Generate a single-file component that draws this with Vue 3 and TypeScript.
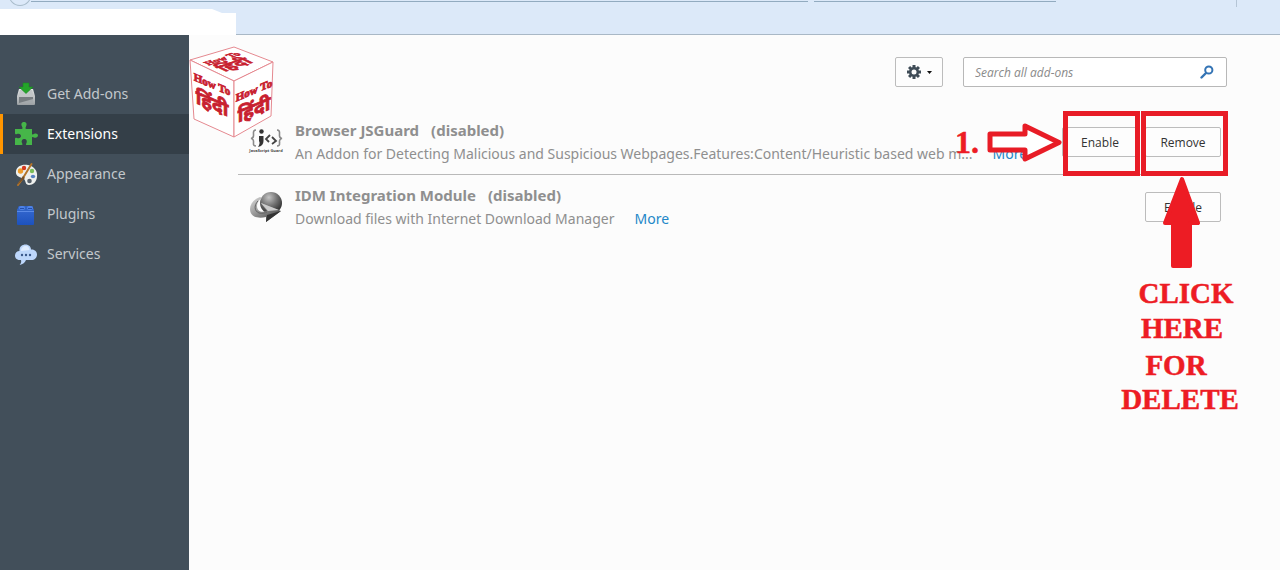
<script setup lang="ts">
import { ref } from 'vue'

interface Category { id: string; label: string }
interface Addon { id: string; name: string; description: string; removable: boolean }

const categories: Category[] = [
  { id: 'get', label: 'Get Add-ons' },
  { id: 'extensions', label: 'Extensions' },
  { id: 'appearance', label: 'Appearance' },
  { id: 'plugins', label: 'Plugins' },
  { id: 'services', label: 'Services' },
]
const addons: Addon[] = [
  {
    id: 'jsguard',
    name: 'Browser JSGuard',
    description: 'An Addon for Detecting Malicious and Suspicious Webpages.Features:Content/Heuristic based web m...',
    removable: true,
  },
  {
    id: 'idm',
    name: 'IDM Integration Module',
    description: 'Download files with Internet Download Manager',
    removable: false,
  },
]
const selected = ref('extensions')
const query = ref('')
</script>

<template>
  <div class="window">
    <header class="chrome">
      <span class="back"></span>
      <span class="field address"></span>
      <span class="field find"></span>
      <span class="divider"></span>
      <svg class="tab" width="236" height="26" viewBox="0 0 236 26" aria-hidden="true">
        <path d="M0 0H212L222 4H236V26H0Z" fill="#fff" />
      </svg>
    </header>

    <div class="body">
      <nav class="sidebar">
        <a
          v-for="c in categories"
          :key="c.id"
          href="#"
          class="category"
          :class="{ active: selected === c.id }"
          @click.prevent="selected = c.id"
        >
          <svg v-if="c.id === 'get'" class="cat-icon" viewBox="0 0 24 24" aria-hidden="true">
            <defs>
              <linearGradient id="tray" x1="0" y1="0" x2="0" y2="1">
                <stop offset="0" stop-color="#e4e6e7" /><stop offset="1" stop-color="#9a9fa2" />
              </linearGradient>
            </defs>
            <path d="M5 7H19L21 14V22Q21 23 20 23H4Q3 23 3 22V14Z" fill="url(#tray)" />
            <path d="M6 8H18L19.500 14H4.500Z" fill="#c2c6c8" />
            <path d="M5 15H19V21H5Z" fill="#777d81" />
            <path d="M5 21L19 17V21Z" fill="#a4a9ac" />
            <path d="M9 1H15V5H19L12 11.500L5 5H9Z" fill="#25a52a" stroke="#188a20" stroke-width=".6" />
          </svg>
          <svg v-else-if="c.id === 'extensions'" class="cat-icon" viewBox="0 0 24 24" aria-hidden="true">
            <path d="M1 7H7.500C9 7 8.500 5.500 8 4.500C6.500 1.500 8 0 10 0S13.500 1.500 12 4.500C11.500 5.500 11 7 12.500 7H18V11.500C18 13 19 12.500 20 12C22 11 24 12 24 13.500S22 16.500 20 15.500C19 15 18 14.500 18 16V23H12.500C11.500 23 12 22 12.500 21C13.500 18.500 12 17 10.300 17S7 18.500 8 21C8.500 22 9 23 7.500 23H1V17C1 15.500 2 15.500 3 16C5.500 17 7 15.500 7 14S5.500 11 3 12C2 12.500 1 12.500 1 11Z" fill="#46b649" />
          </svg>
          <svg v-else-if="c.id === 'appearance'" class="cat-icon" viewBox="0 0 24 24" aria-hidden="true">
            <path d="M2 9C3 4 8 2 14 3C20 4 24 9 23 15C22.500 20 19 23 15 23C11 23 12 19 10 17C7 15 1 15 2 9Z" fill="#eef0ee" />
            <circle cx="6.500" cy="9" r="2.700" fill="#ef9d2c" />
            <circle cx="10" cy="6" r="2.200" fill="#d33a20" />
            <circle cx="18" cy="9" r="2.200" fill="#79bd58" />
            <ellipse cx="19" cy="14.500" rx="2.200" ry="1.800" fill="#5784c3" />
            <circle cx="15.500" cy="19" r="2.300" fill="#56606a" />
            <path d="M17.500 2L9 16L4 23" stroke="#b5752a" stroke-width="2" fill="none" stroke-linecap="round" />
            <path d="M9 14L3 23L11 16Z" fill="#775028" />
          </svg>
          <svg v-else-if="c.id === 'plugins'" class="cat-icon" viewBox="0 0 24 24" aria-hidden="true">
            <defs>
              <linearGradient id="brick" x1="0" y1="0" x2="0" y2="1">
                <stop offset="0" stop-color="#386bd2" /><stop offset="1" stop-color="#1d52bd" />
              </linearGradient>
            </defs>
            <path d="M3 8L5 4H18L20 8V22Q20 23 19 23H4Q3 23 3 22Z" fill="url(#brick)" />
            <path d="M5 4H18L20 9H3Z" fill="#2f63c6" />
            <rect x="5" y="4" width="6" height="4" rx="2" fill="#4f82e6" />
            <rect x="13" y="4" width="6" height="4" rx="2" fill="#4f82e6" />
            <path d="M6 6.500H10M14 6.500H18" stroke="#234eaa" />
            <path d="M3 9.500H20" stroke="#6d9bf0" stroke-width=".7" />
          </svg>
          <svg v-else class="cat-icon" viewBox="0 0 24 24" aria-hidden="true">
            <path d="M6 18C2 18 1 15.500 1 13.500C1 11 3 9 5.500 9C5 5 8 2.500 11.500 2.500C15 2.500 17 5 17 7.500C20.500 7 23 9.500 23 12.500C23 16 20.500 18 17.500 18H12C11 20.500 9 22.500 5.500 23C7 21.500 7.500 20 7 18Z" fill="#bdd7fb" />
            <path d="M7 9C7 6 9 4 12 4C14 4 15.500 6 15.500 8Z" fill="#e0edff" />
            <circle cx="8" cy="13" r="1.200" fill="#39598c" />
            <circle cx="12" cy="13" r="1.200" fill="#39598c" />
            <circle cx="16" cy="13" r="1.200" fill="#39598c" />
          </svg>
          <span>{{ c.label }}</span>
        </a>
      </nav>

      <main class="content">
        <div class="toolbar">
          <button class="btn tools" type="button" aria-label="Tools for all add-ons">
            <svg width="16" height="16" viewBox="0 0 16 16" aria-hidden="true">
              <g fill="#3f4c57">
                <rect v-for="a in [0, 45, 90, 135]" :key="a" x="6.500" y="1" width="3" height="14" :transform="`rotate(${a} 8 8)`" />
                <circle cx="8" cy="8" r="5" />
              </g>
              <circle cx="8" cy="8" r="2.500" fill="#fcfcfc" />
            </svg>
            <svg width="5" height="3" viewBox="0 0 5 3" aria-hidden="true"><path d="M0 0H5L2.500 3Z" fill="#111" /></svg>
          </button>
          <label class="search">
            <input v-model="query" type="text" placeholder="Search all add-ons" aria-label="Search all add-ons" />
            <svg width="14" height="14" viewBox="0 0 14 14" aria-hidden="true">
              <circle cx="8.800" cy="5" r="3.600" fill="none" stroke="#3474b5" stroke-width="2" />
              <path d="M6 8L1.500 12.500" stroke="#3474b5" stroke-width="2.400" stroke-linecap="round" />
            </svg>
          </label>
        </div>

        <ul class="addons">
          <li v-for="a in addons" :key="a.id" class="addon">
            <svg v-if="a.id === 'jsguard'" class="addon-icon" viewBox="0 0 32 32" aria-hidden="true">
              <g fill="none" stroke="#8a8a8a" stroke-width="1.600">
                <path d="M6 4Q3 4 3.500 8Q4 12 1 12.500Q4 13 3.500 17Q3 20 6 20" />
                <path d="M27 4Q30 4 29.500 8Q29 12 32 12.500Q29 13 29.500 17Q30 20 27 20" />
              </g>
              <circle cx="11.500" cy="5.500" r="2.200" fill="#333" />
              <path d="M9 10H13.500V15Q13.500 20 8 21Q10.500 17 9 15Z" fill="#333" />
              <path d="M20 9L16 13L19 16M22 11L26 15L22 18" fill="none" stroke="#444" stroke-width="1.800" />
              <text x="16" y="26" text-anchor="middle" class="tiny">JavaScript Guard</text>
            </svg>
            <svg v-else class="addon-icon" viewBox="0 0 32 32" aria-hidden="true">
              <defs>
                <radialGradient id="ball" cx=".4" cy=".25" r=".8">
                  <stop offset="0" stop-color="#c4c4c4" /><stop offset=".45" stop-color="#777" /><stop offset="1" stop-color="#222" />
                </radialGradient>
                <linearGradient id="swoosh" x1="0" y1="0" x2="1" y2="1">
                  <stop offset="0" stop-color="#ddd" /><stop offset=".5" stop-color="#888" /><stop offset="1" stop-color="#333" />
                </linearGradient>
              </defs>
              <circle cx="21" cy="12" r="11" fill="url(#ball)" />
              <path d="M10 6C4 8 0 13 0 18C0 26 8 28 16 26V31L31 20L11 12L17 20C11 22 7 20 7 15C7 11 9 9 12 7Z" fill="url(#swoosh)" />
              <path d="M8 10C4 14 4 20 9 22C12 23 15 22 17 21" fill="none" stroke="#666" stroke-width="1" />
              <path d="M16 31L31 20L17 24Z" fill="#333" />
              <path d="M11 12L29 19L18 20Z" fill="#ccc" />
            </svg>
            <div class="info">
              <h2 class="name"><span>{{ a.name }}</span><span>(disabled)</span></h2>
              <p class="desc"><span>{{ a.description }}</span><a href="#" @click.prevent>More</a></p>
            </div>
            <div class="actions">
              <button class="btn" type="button">Enable</button>
              <button v-if="a.removable" class="btn" type="button">Remove</button>
            </div>
          </li>
        </ul>

        <svg class="cube" width="86" height="94" viewBox="0 0 86 94" role="img" aria-label="How To हिंदी">
          <g fill="#fff" stroke="#e58990" stroke-width="1" stroke-linejoin="round">
            <path d="M1 14L45 1L84 16L45 35Z" />
            <path d="M1 14L45 35V91L5 73Z" />
            <path d="M45 35L84 16L82 70L45 91Z" />
          </g>
          <g fill="#c8202f" stroke="#c8202f" stroke-width=".8" text-anchor="middle">
            <g transform="matrix(1 .42 0 1 23 42)">
              <text class="how">How To</text><text class="hindi" y="22">हिंदी</text>
            </g>
            <g transform="matrix(1 -.42 0 1 65 42)">
              <text class="how" y="6">How To</text><text class="hindi" y="28">हिंदी</text>
            </g>
            <g transform="matrix(.9 -.3 .8 .4 36 14)">
              <text class="how">How To</text><text class="hindi" y="18">हिंदी</text>
            </g>
          </g>
        </svg>

        <svg class="notes" width="340" height="400" viewBox="940 35 340 400" aria-hidden="true">
          <g fill="none" stroke="#e81c26" stroke-width="5">
            <rect x="1065.500" y="113.500" width="72" height="60" />
            <rect x="1143.500" y="113.500" width="82" height="60" />
            <path d="M990 134H1025V126L1059 142.500L1025 159V150H990Z" fill="#fff" stroke-linejoin="round" />
          </g>
          <path d="M1182 179L1198 223H1190V266H1173V223H1165Z" fill="#ed1c24" stroke="#ed1c24" stroke-width="4" stroke-linejoin="round" />
          <g class="note-text">
            <text x="967" y="153" class="step">1.</text>
            <text x="1186" y="303">CLICK</text>
            <text x="1182" y="338">HERE</text>
            <text x="1176" y="375">FOR</text>
            <text x="1180" y="409">DELETE</text>
          </g>
        </svg>
      </main>
    </div>
  </div>
</template>

<style>
body { margin: 0; }
</style>

<style scoped>
.window {
  display: flex;
  flex-direction: column;
  min-height: 100vh;
  background: #fcfcfc;
  font-family: "Noto Sans", "Open Sans", sans-serif;
  overflow: hidden;
}
.chrome {
  position: relative;
  height: 34px;
  background: #dce9f9;
  border-bottom: 1px solid #a9b8c6;
}
.tab { position: absolute; left: 0; top: 9px; }
.back {
  position: absolute; left: 8px; top: -20px; width: 22px; height: 24px;
  border: 1px solid #a9bccb; border-radius: 50%; clip-path: inset(20px 0 0 0);
}
.field { position: absolute; top: 0; height: 1px; border-bottom: 1px solid #92abc0; }
.address { left: 31px; right: 472px; }
.find { right: 224px; width: 242px; }
.divider { position: absolute; right: 43px; top: 0; width: 1px; height: 7px; background: #b5c5d6; }
.body { display: flex; flex: 1; }
.sidebar {
  display: flex;
  flex-direction: column;
  flex: 0 0 189px;
  padding-top: 39px;
  background: #424f5a;
}
.category {
  display: flex;
  align-items: center;
  gap: 9px;
  height: 40px;
  padding-left: 14px;
  color: #c3c8cc;
  font-size: 14px;
  text-decoration: none;
}
.category span { padding-bottom: 2px; }
.category.active { color: #fff; background: #343f48; box-shadow: inset 3px 0 #ff9500; }
.cat-icon { width: 24px; height: 24px; }
.content { position: relative; flex: 1; min-width: 0; padding: 22px 53px 0 49px; }
.toolbar { display: flex; justify-content: flex-end; gap: 20px; }
.btn {
  width: 76px;
  height: 30px;
  padding: 0;
  border: 1px solid #bcbcbc;
  border-radius: 2px;
  background: #fdfdfd;
  color: #333;
  font-family: "Open Sans", sans-serif;
  font-size: 12px;
}
.tools { display: flex; align-items: center; justify-content: center; gap: 5px; width: 48px; }
.search {
  display: flex;
  align-items: center;
  box-sizing: border-box;
  width: 264px;
  height: 30px;
  padding: 0 12px 0 11px;
  border: 1px solid #b8b8b8;
  border-radius: 2px;
  background: #fff;
}
.search input {
  flex: 1; min-width: 0; padding: 0; border: 0; outline: 0; background: transparent;
  font-family: "Open Sans", sans-serif; font-size: 12px;
}
.search input::placeholder { color: #8a8a8a; font-style: italic; opacity: 1; }
.addons { margin: 23px 0 0; padding: 0; list-style: none; }
.addon {
  display: flex;
  align-items: center;
  height: 64px;
  padding: 0 6px 0 12px;
  border-bottom: 1px solid #b9b9b9;
}
.addon:last-child { border-bottom: 0; }
.addon-icon { flex: none; width: 32px; height: 32px; overflow: visible; }
.tiny { font: 700 4px "Open Sans", sans-serif; fill: #444; }
.info { flex: 1; min-width: 0; margin-left: 13px; color: #8f8f8f; white-space: nowrap; }
.name { display: flex; gap: 12px; margin: 0; font-size: 15px; line-height: 24px; font-weight: 700; }
.desc { display: flex; gap: 20px; margin: 0; font-size: 14px; line-height: 24px; }
.desc a { color: #2387c8; text-decoration: none; }
.actions { display: flex; gap: 7px; }
.cube { position: absolute; left: 0; top: 11px; }
.how { font: 700 11px "Liberation Serif", serif; }
.hindi { font: 700 19px "Noto Sans Devanagari", "Noto Sans", sans-serif; }
.notes { position: absolute; right: 0; top: 0; pointer-events: none; }
.note-text { font: 700 29px "Liberation Serif", serif; fill: #ed1c24; stroke: #ed1c24; stroke-width: 0.5px; text-anchor: middle; }
.step { font-size: 32px; }
</style>
